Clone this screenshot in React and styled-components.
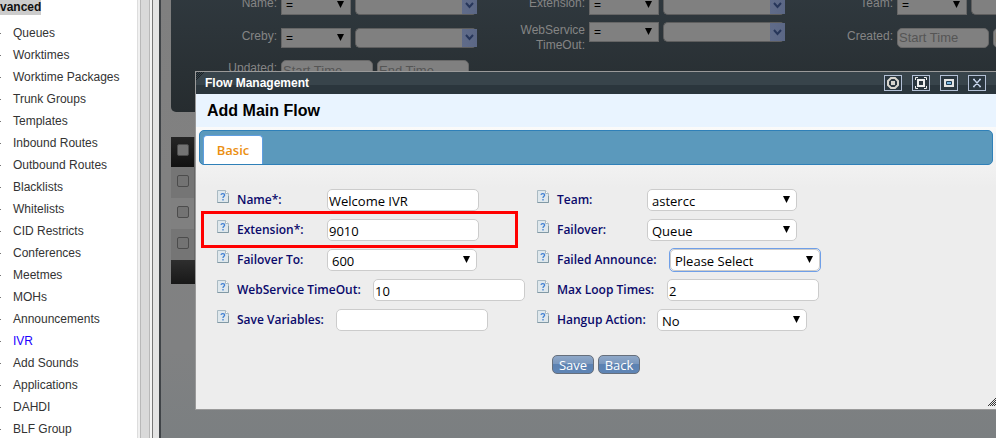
import { useState } from "react";
import styled, { createGlobalStyle } from "styled-components";

const menuItems = [
  "Queues",
  "Worktimes",
  "Worktime Packages",
  "Trunk Groups",
  "Templates",
  "Inbound Routes",
  "Outbound Routes",
  "Blacklists",
  "Whitelists",
  "CID Restricts",
  "Conferences",
  "Meetmes",
  "MOHs",
  "Announcements",
  "IVR",
  "Add Sounds",
  "Applications",
  "DAHDI",
  "BLF Group",
];

const filters = [
  { id: "name", label: "Name:", type: "combo" },
  { id: "extension", label: "Extension:", type: "combo" },
  { id: "team", label: "Team:", type: "combo" },
  { id: "creby", label: "Creby:", type: "combo" },
  { id: "timeout", label: "WebService TimeOut:", type: "combo" },
  { id: "created", label: "Created:", type: "range" },
  { id: "updated", label: "Updated:", type: "range" },
];

// Fields go in pairs, left column then right column
const fields = [
  { id: "name", label: "Name*:", value: "Welcome IVR" },
  { id: "team", label: "Team:", options: ["astercc"] },
  { id: "extension", label: "Extension*:", value: "9010", marked: true },
  { id: "failover", label: "Failover:", options: ["Queue"] },
  { id: "failoverTo", label: "Failover To:", options: ["600"] },
  { id: "announce", label: "Failed Announce:", options: ["Please Select"], active: true, width: 113 },
  { id: "timeout", label: "WebService TimeOut:", value: "10", width: 136 },
  { id: "loops", label: "Max Loop Times:", value: "2", width: 110 },
  { id: "variables", label: "Save Variables:", value: "", width: 99 },
  { id: "hangup", label: "Hangup Action:", options: ["No"], width: 100 },
];

function Filter({ item }) {
  const id = `filter-${item.id}`;
  return (
    <FilterCell>
      <FilterLabel htmlFor={id}>{item.label}</FilterLabel>
      {item.type === "combo" ? (
        <>
          <OperatorWrap>
            <Operator id={id} defaultValue="=">
              <option>=</option>
            </Operator>
            <Arrow viewBox="0 0 7 7"><path d="M0 0h7L3.500 7z" /></Arrow>
          </OperatorWrap>
          <Combo>
            <ComboInput aria-label={`${item.label} value`} />
            <ComboButton type="button" aria-label="Open list">
              <svg width="9" height="7" viewBox="0 0 9 7">
                <path d="M1 1l3.500 4L8 1" fill="none" stroke="#27365a" strokeWidth="2" />
              </svg>
            </ComboButton>
          </Combo>
        </>
      ) : (
        <>
          <DateInput id={id} placeholder="Start Time" />
          <DateInput placeholder="End Time" aria-label={`${item.label} end`} />
        </>
      )}
    </FilterCell>
  );
}

function HelpIcon() {
  return (
    <Help viewBox="0 0 12 13" aria-hidden="true">
      <path d="M.5.5h8l3 3v9H.5z" fill="#dfe8ed" stroke="#a9bac3" />
      <path d="M8.500.5v3h3" fill="#fff" stroke="#a9bac3" />
      <path d="M.5 12.500h11V6" fill="none" stroke="#8199a5" />
      <path d="M4 4.800C4.200 3.200 7.600 3.200 7.600 5 7.600 6.400 6 6.200 6 8M6 9v1.500" fill="none" stroke="#3f7fd2" strokeWidth="1.300" />
    </Help>
  );
}

function Field({ field }) {
  const id = `flow-${field.id}`;
  return (
    <FieldRow>
      <HelpIcon />
      <FieldLabel htmlFor={id} $width={field.width}>{field.label}</FieldLabel>
      {field.options ? (
        <SelectWrap $active={field.active}>
          <Select id={id}>
            {field.options.map((option) => <option key={option}>{option}</option>)}
          </Select>
          <Arrow viewBox="0 0 7 7"><path d="M0 0h7L3.500 7z" /></Arrow>
        </SelectWrap>
      ) : (
        <Input id={id} defaultValue={field.value} />
      )}
      {field.marked && <Mark />}
    </FieldRow>
  );
}

function WindowButtons() {
  return (
    <WindowTools>
      <ToolButton type="button" aria-label="Pin">
        <svg width="12" height="12" viewBox="0 0 12 12">
          <path d="M4 1h4l3 3v4L8 11H4L1 8V4z" fill="none" stroke="#d8d5ce" strokeWidth="2" />
          <path d="M4 4h4v4H4z" fill="#d8d5ce" />
        </svg>
      </ToolButton>
      <ToolButton type="button" aria-label="Full screen">
        <svg width="12" height="12" viewBox="0 0 12 12">
          <path d="M.5 3V.5H3M9 .5h2.500V3M11.500 9v2.500H9M3 11.500H.5V9" fill="none" stroke="#eee" />
          <path d="M3 3h6v6H3z" fill="none" stroke="#eee" strokeWidth="2" />
        </svg>
      </ToolButton>
      <ToolButton type="button" aria-label="Restore">
        <svg width="12" height="12" viewBox="0 0 12 12">
          <path d="M1 2h10v8H1z" fill="#e4e4e4" />
          <path d="M3.500 4.500h5v3h-5z" fill="#79b5df" stroke="#1d3c55" />
        </svg>
      </ToolButton>
      <ToolButton type="button" aria-label="Close">
        <svg width="12" height="12" viewBox="0 0 12 12">
          <path d="M2 2.500h2M8 2.500h2M2 9.500h2M8 9.500h2M3 2.500l6 7M9 2.500l-6 7" fill="none" stroke="#c5d3ea" strokeWidth="1.300" />
        </svg>
      </ToolButton>
    </WindowTools>
  );
}

function App() {
  const [selected, setSelected] = useState("IVR");

  return (
    <Page>
      <GlobalStyle />

      <Sidebar>
        <Menu>
          <MenuTitle>Advanced</MenuTitle>
          <MenuList>
            {menuItems.map((item) => (
              <MenuItem key={item}>
                <MenuLink href="#" $active={item === selected} onClick={() => setSelected(item)}>
                  {item}
                </MenuLink>
              </MenuItem>
            ))}
          </MenuList>
        </Menu>
        <ScrollTrack />
      </Sidebar>
      <Splitter />

      <Main>
        <FilterPanel>
          {filters.map((item) => <Filter key={item.id} item={item} />)}
        </FilterPanel>

        <Table>
          <thead>
            <tr>
              <th><Check type="checkbox" aria-label="Select all" /></th>
              <th />
            </tr>
          </thead>
          <tbody>
            {[1, 2, 3].map((row) => (
              <tr key={row}>
                <td><Check type="checkbox" aria-label={`Select row ${row}`} /></td>
                <td />
              </tr>
            ))}
          </tbody>
          <tfoot>
            <tr><td colSpan={2} /></tr>
          </tfoot>
        </Table>

        <Dialog role="dialog" aria-label="Flow Management">
          <TitleBar>
            <Hatch viewBox="0 0 8 8">
              <path d="M0 2L2 0M0 4L4 0M0 6L6 0M0 8L8 0" stroke="#11171b" strokeWidth=".8" />
            </Hatch>
            <DialogTitle>Flow Management</DialogTitle>
            <WindowButtons />
          </TitleBar>
          <Heading>Add Main Flow</Heading>
          <Body>
            <TabBar>
              <Tab type="button">Basic</Tab>
            </TabBar>
            <Form>
              {fields.map((field) => <Field key={field.id} field={field} />)}
            </Form>
            <Actions>
              <ActionButton type="button">Save</ActionButton>
              <ActionButton type="button">Back</ActionButton>
            </Actions>
          </Body>
          <Grip viewBox="0 0 8 8">
            <path d="M0 8L8 0M2 8l6-6M4 8l4-4M6 8l2-2" stroke="#222" strokeWidth=".9" />
          </Grip>
        </Dialog>
      </Main>
    </Page>
  );
}

const GlobalStyle = createGlobalStyle`
  * { box-sizing: border-box; }
  body {
    margin: 0;
    overflow: hidden;
    font-family: "Liberation Sans", Arial, sans-serif;
    font-size: 12px;
    color: #333;
  }
  input, select, button { font-family: inherit; font-size: inherit; }
`;

const Page = styled.div`
  display: flex;
  height: 100vh;
  overflow: hidden;
`;

// Left menu
const Sidebar = styled.aside`
  display: flex;
  flex: 0 0 152px;
  overflow: hidden;
  background: #fff;
`;

const Menu = styled.nav`
  flex: 1;
  margin-left: -16px;
`;

const MenuTitle = styled.h2`
  display: inline-block;
  margin: 0;
  background: #ccc;
  color: #111;
  font-size: 12px;
  line-height: 15px;
`;

const MenuList = styled.ul`
  margin: 0;
  padding: 7px 0 0 16px;
  list-style: none;
`;

const MenuItem = styled.li`
  display: flex;
  align-items: center;
  gap: 12px;
  height: 22px;
  white-space: nowrap;

  &::before {
    content: "";
    width: 1px;
    height: 1px;
    background: #777;
  }
`;

const MenuLink = styled.a`
  color: ${(props) => (props.$active ? "#1a00ff" : "#333")};
  text-decoration: none;
`;

const ScrollTrack = styled.div`
  width: 15px;
  border-left: 1px solid #ddd;
  border-right: 2px solid #f4f4f4;
  background: #d9d9d9;
  box-shadow: inset 2px 0 #f0f0f0, inset 3px 0 #b8b8b8, inset -1px 0 #b8b8b8;
`;

const Splitter = styled.div`
  flex: 0 0 9px;
  border-left: 1px solid #777;
  border-right: 2px solid #3f4347;
  background: #e4e4e4;
`;

// Dimmed page behind the dialog
const Main = styled.main`
  position: relative;
  flex: 1;
  min-width: 0;
  padding-left: 10px;
  overflow: hidden;
  background: linear-gradient(#7f7f7f 0%, #818181 40%, #808182 80%, #7b7f81 100%);
`;

const FilterPanel = styled.section`
  display: grid;
  grid-template-columns: repeat(3, 308px);
  align-items: center;
  row-gap: 7px;
  margin-top: -10px;
  padding: 5px 0 32px;
  border-radius: 5px;
  background: linear-gradient(#30393f, #262c2f);
`;

const FilterCell = styled.div`
  display: flex;
  gap: 4px;
`;

const FilterLabel = styled.label`
  width: 106px;
  padding: 1px 0 0 34px;
  color: #858585;
  line-height: 15px;
  text-align: right;
`;

const OperatorWrap = styled.span`
  position: relative;
  display: flex;
  height: 20px;
`;

const Operator = styled.select`
  width: 70px;
  height: 20px;
  padding: 0 4px;
  appearance: none;
  border: 1px solid #666;
  background: #808080;
  color: #000;
`;

const Arrow = styled.svg`
  position: absolute;
  top: calc(50% - 4px);
  right: 7px;
  width: 7px;
  height: 7px;
  pointer-events: none;
`;

const Combo = styled.span`
  display: flex;
  width: 122px;
  height: 20px;
  border: 1px solid #5e5e5e;
  border-right: 0;
  border-radius: 5px;
  background: #808080;
`;

const ComboInput = styled.input`
  flex: 1;
  min-width: 0;
  border: 0;
  background: transparent;
`;

const ComboButton = styled.button`
  display: grid;
  place-items: center;
  width: 15px;
  height: 18px;
  padding: 0;
  border: 0;
  background: linear-gradient(90deg, #606c8a, #5b6785);
`;

const DateInput = styled.input`
  width: 92px;
  height: 20px;
  padding: 0 1px;
  border: 1px solid #686868;
  border-radius: 5px;
  background: #808080;
  font-size: 13px;

  &::placeholder { color: #555; }
`;

const Table = styled.table`
  width: 100%;
  margin-top: 25px;
  border-collapse: collapse;

  th, td {
    height: 31px;
    padding: 0 0 4px 6px;
    border-right: 1px solid #666;
    text-align: left;
  }
  th:first-child, td:first-child { width: 23px; }
  thead th { height: 30px; background: linear-gradient(#262626, #111); }
  tbody tr { background: #808080; }
  tbody tr:nth-child(odd) { background: #757575; }
  tfoot td { height: 24px; background: linear-gradient(#2e2e2e, #181818); }
`;

const Check = styled.input`
  display: block;
  width: 12px;
  height: 12px;
  margin: 0;
  appearance: none;
  border: 1px solid #4c4c4c;
  border-radius: 2px;
  background: #737373;
`;

// Dialog window
const Dialog = styled.section`
  position: absolute;
  top: 71px;
  left: 34px;
  right: 0;
  border: 1px solid #9a9a9a;
  border-right: 0;
  background: #ededed;
`;

const TitleBar = styled.header`
  position: relative;
  display: flex;
  align-items: center;
  justify-content: space-between;
  height: 22px;
  padding: 0 10px 0 9px;
  background: linear-gradient(#38444b 60%, #2b363d 60%);
`;

const Hatch = styled.svg`
  position: absolute;
  top: 0;
  left: 0;
  width: 8px;
  height: 8px;
`;

const DialogTitle = styled.h1`
  margin: 0;
  color: #fff;
  font-size: 12px;
`;

const WindowTools = styled.div`
  display: flex;
  gap: 10px;
`;

const ToolButton = styled.button`
  display: grid;
  place-items: center;
  width: 18px;
  height: 16px;
  padding: 0;
  border: 1px solid #b3c0d6;
  background: #2b3740;
`;

const Heading = styled.h2`
  margin: 0;
  padding: 1px 11px 0;
  background: #e9f4ff;
  color: #000;
  font-size: 16px;
  line-height: 32px;
`;

const Body = styled.div`
  padding: 3px 3px 35px;
  background: linear-gradient(#fafafa, #ededed 60px);
  font-family: "Open Sans", "Noto Sans", sans-serif;
`;

const TabBar = styled.div`
  display: flex;
  height: 35px;
  padding: 4px 3px 0;
  border: 1px solid #2f80b8;
  border-radius: 5px;
  background: #5b99bc;
`;

const Tab = styled.button`
  width: 60px;
  padding: 0;
  border: 1px solid #5f9ee0;
  border-bottom: 0;
  border-radius: 4px 4px 0 0;
  background: #fff;
  color: #eb8f10;
  font-weight: 600;
  font-size: 13px;
`;

const Form = styled.form`
  display: grid;
  grid-template-columns: 320px 1fr;
  row-gap: 8px;
  padding: 24px 18px 0;
`;

const FieldRow = styled.div`
  position: relative;
  display: flex;
  height: 22px;
`;

const Help = styled.svg`
  width: 12px;
  height: 13px;
  margin: 1px 8px 0 0;
`;

const FieldLabel = styled.label`
  width: ${(props) => props.$width || 90}px;
  color: #0a0a6b;
  font-weight: 600;
  line-height: 21px;
  white-space: nowrap;
`;

const Input = styled.input`
  width: 152px;
  height: 22px;
  padding: 1px 1px 0;
  border: 1px solid #ccc;
  border-radius: 5px;
  background: #fff;
  color: #000;
  font-size: 13px;
`;

const SelectWrap = styled.span`
  position: relative;
  display: flex;
  border-radius: 4px;
  outline: ${(props) => (props.$active ? "1px solid #6f9fe8" : "none")};
`;

const Select = styled.select`
  width: 150px;
  height: 22px;
  padding: 1px 4px 0;
  appearance: none;
  border: 1px solid #ccc;
  border-radius: 5px;
  background: #fff;
  color: #000;
  font-size: 13px;
`;

// Red frame round the field the user has to fill in
const Mark = styled.span`
  position: absolute;
  top: -8px;
  left: -16px;
  width: 317px;
  height: 37px;
  border: 3px solid #f00;
  pointer-events: none;
`;

const Actions = styled.div`
  display: flex;
  justify-content: center;
  gap: 4px;
  margin-top: 24px;
`;

const ActionButton = styled.button`
  width: 42px;
  height: 19px;
  padding: 0;
  border: 1px solid #666f7c;
  border-radius: 5px;
  background: linear-gradient(#8fa8c8 0%, #7896bd 50%, #5c82b2 50%, #5f85b5 100%);
  color: #fff;
  font-size: 13px;
  line-height: 19px;
`;

const Grip = styled.svg`
  position: absolute;
  right: 0;
  bottom: 3px;
  width: 8px;
  height: 8px;
`;

export default App;
